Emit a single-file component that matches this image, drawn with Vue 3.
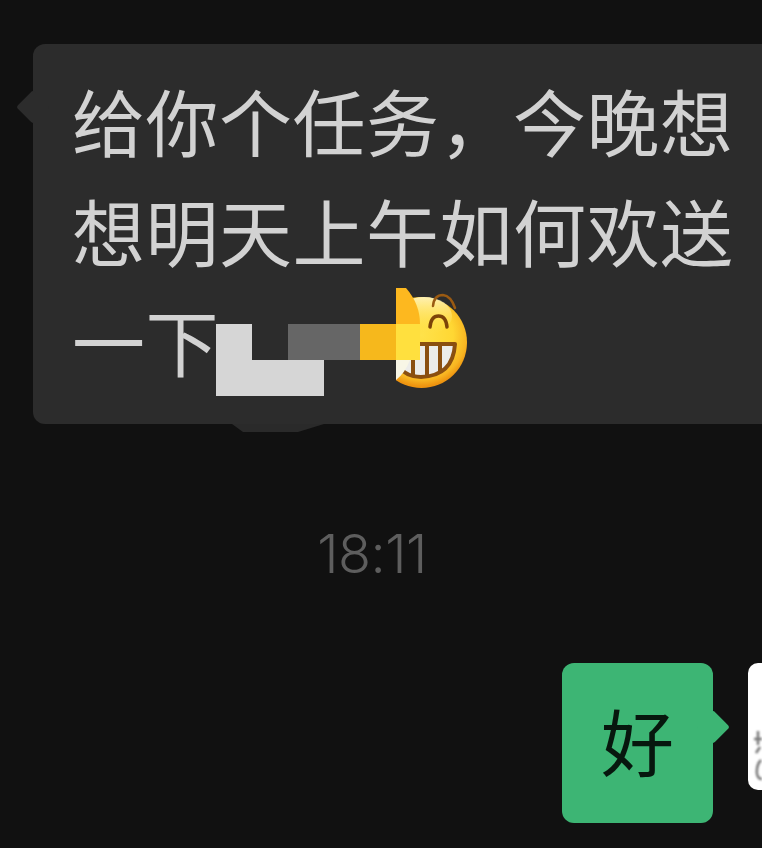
<script setup>
const lines = ['给你个任务\uFF0C今晚想', '想明天上午如何欢送'];
const mosaic = [
  { x: 0, y: 36, w: 36, h: 72, fill: '#d6d6d6' },
  { x: 36, y: 72, w: 72, h: 36, fill: '#d6d6d6' },
  { x: 72, y: 36, w: 72, h: 36, fill: '#666666' },
  { x: 144, y: 36, w: 36, h: 36, fill: '#f6b81c' },
  { x: 180, y: 36, w: 24, h: 36, fill: '#ffe03e' },
];
</script>

<template>
  <main class="chat">
    <section class="incoming">
      <div class="bubble">
        <p v-for="line in lines" :key="line" class="line">{{ line }}</p>
        <div class="line last">
          <span>一下</span>
          <svg class="mask" width="254" height="108" viewBox="0 0 254 108">
            <defs>
              <radialGradient id="face" cx="50%" cy="42%" r="56%">
                <stop offset="0" stop-color="#ffe24a" />
                <stop offset="0.62" stop-color="#ffd733" />
                <stop offset="0.88" stop-color="#f8b622" />
                <stop offset="1" stop-color="#ee9410" />
              </radialGradient>
              <linearGradient id="shine" x1="0" y1="0" x2="0" y2="1">
                <stop offset="0" stop-color="#fff6c4" stop-opacity="0.9" />
                <stop offset="1" stop-color="#ffe24a" stop-opacity="0" />
              </linearGradient>
              <clipPath id="visible"><rect x="180" y="0" width="74" height="108" /></clipPath>
            </defs>
            <g clip-path="url(#visible)">
              <circle cx="205.500" cy="54.500" r="45.500" fill="url(#face)" />
              <ellipse cx="208" cy="28" rx="28" ry="19" fill="url(#shine)" />
              <path d="M172 56H239Q237 88 205 89Q180 89 172 56z" fill="#ececea" stroke="#8a4f10" stroke-width="4" stroke-linejoin="round" />
              <path d="M197 57v31M211 57v32M224 57v28" stroke="#8a4f10" stroke-width="4" />
            </g>
            <path d="M217 18q1-11 10-11q8 1 12 13" fill="none" stroke="#9a5a12" stroke-width="2.500" stroke-linecap="round" />
            <path d="M214 39q1-11 8.500-11q7.500 0 8.500 11" fill="none" stroke="#7c4308" stroke-width="3.500" stroke-linecap="round" />
            <path d="M180 0h10q14 16 14 36h-24z" fill="#fdb81f" />
            <path d="M180 72h14q-5 13-14 20z" fill="#f8f6e6" />
            <rect v-for="r in mosaic" :key="r.x + '-' + r.y" :x="r.x" :y="r.y" :width="r.w" :height="r.h" :fill="r.fill" />
          </svg>
        </div>
        <svg class="blob" width="92" height="9" viewBox="0 0 92 9"><path d="M0 0h92l-26 8h-55z" fill="#2a2a2a" /></svg>
      </div>
    </section>

    <time class="stamp">18:11</time>

    <section class="outgoing">
      <div class="reply">好</div>
      <div class="avatar">
        <svg width="14" height="127" viewBox="0 0 14 127">
          <path d="M6 76h8M10 68v14M12 84l-4 6M13 97q-5 5-4 14q1 5 5 5" fill="none" stroke="#777777" stroke-width="2.500" />
        </svg>
      </div>
    </section>
  </main>
</template>

<style scoped>
.chat {
  width: 762px;
  height: 848px;
  padding-top: 44px;
  box-sizing: border-box;
  overflow: hidden;
  display: flex;
  flex-direction: column;
  background: #111111;
  font-family: "Noto Sans CJK SC", "Liberation Sans", sans-serif;
}
.incoming {
  padding-left: 33px;
}
.bubble {
  position: relative;
  width: 800px;
  height: 380px;
  box-sizing: border-box;
  padding: 20px 0 0 39px;
  border-radius: 12px 0 0 12px;
  background: #2c2c2c;
  color: #d2d2d2;
  font-size: 73px;
  font-weight: 400;
  letter-spacing: 0.5px;
}
.bubble::before {
  content: "";
  position: absolute;
  left: -12px;
  top: 51px;
  width: 24px;
  height: 24px;
  border-radius: 3px;
  background: #2c2c2c;
  transform: rotate(45deg);
}
.line {
  position: relative;
  margin: 0;
  height: 110px;
  line-height: 110px;
  white-space: nowrap;
}
.last {
  display: flex;
  align-items: flex-start;
}
.mask {
  display: block;
  margin: 4px 0 0 -3px;
  flex: none;
}
.blob {
  position: absolute;
  left: 199px;
  top: 380px;
  display: block;
}
.stamp {
  align-self: center;
  margin: 95px 0 0 -18px;
  height: 70px;
  line-height: 70px;
  font-family: Inter, sans-serif;
  font-size: 54px;
  font-weight: 300;
  letter-spacing: -0.5px;
  color: #5e5e5e;
}
.outgoing {
  display: flex;
  align-items: flex-start;
  gap: 35px;
  margin: 74px 0 0 562px;
}
.reply {
  position: relative;
  flex: none;
  width: 151px;
  height: 160px;
  border-radius: 12px;
  background: #3db574;
  color: #07170e;
  font-size: 73px;
  font-weight: 400;
  line-height: 152px;
  text-align: center;
}
.reply::after {
  content: "";
  position: absolute;
  right: -12px;
  top: 52px;
  width: 24px;
  height: 24px;
  border-radius: 3px;
  background: #3db574;
  transform: rotate(45deg);
}
.avatar {
  flex: none;
  width: 60px;
  height: 127px;
  border-radius: 10px;
  background: #ffffff;
}
.avatar svg {
  display: block;
  filter: blur(1px);
}
</style>

<style>
body {
  background: #111111;
  overflow: hidden;
}
</style>
